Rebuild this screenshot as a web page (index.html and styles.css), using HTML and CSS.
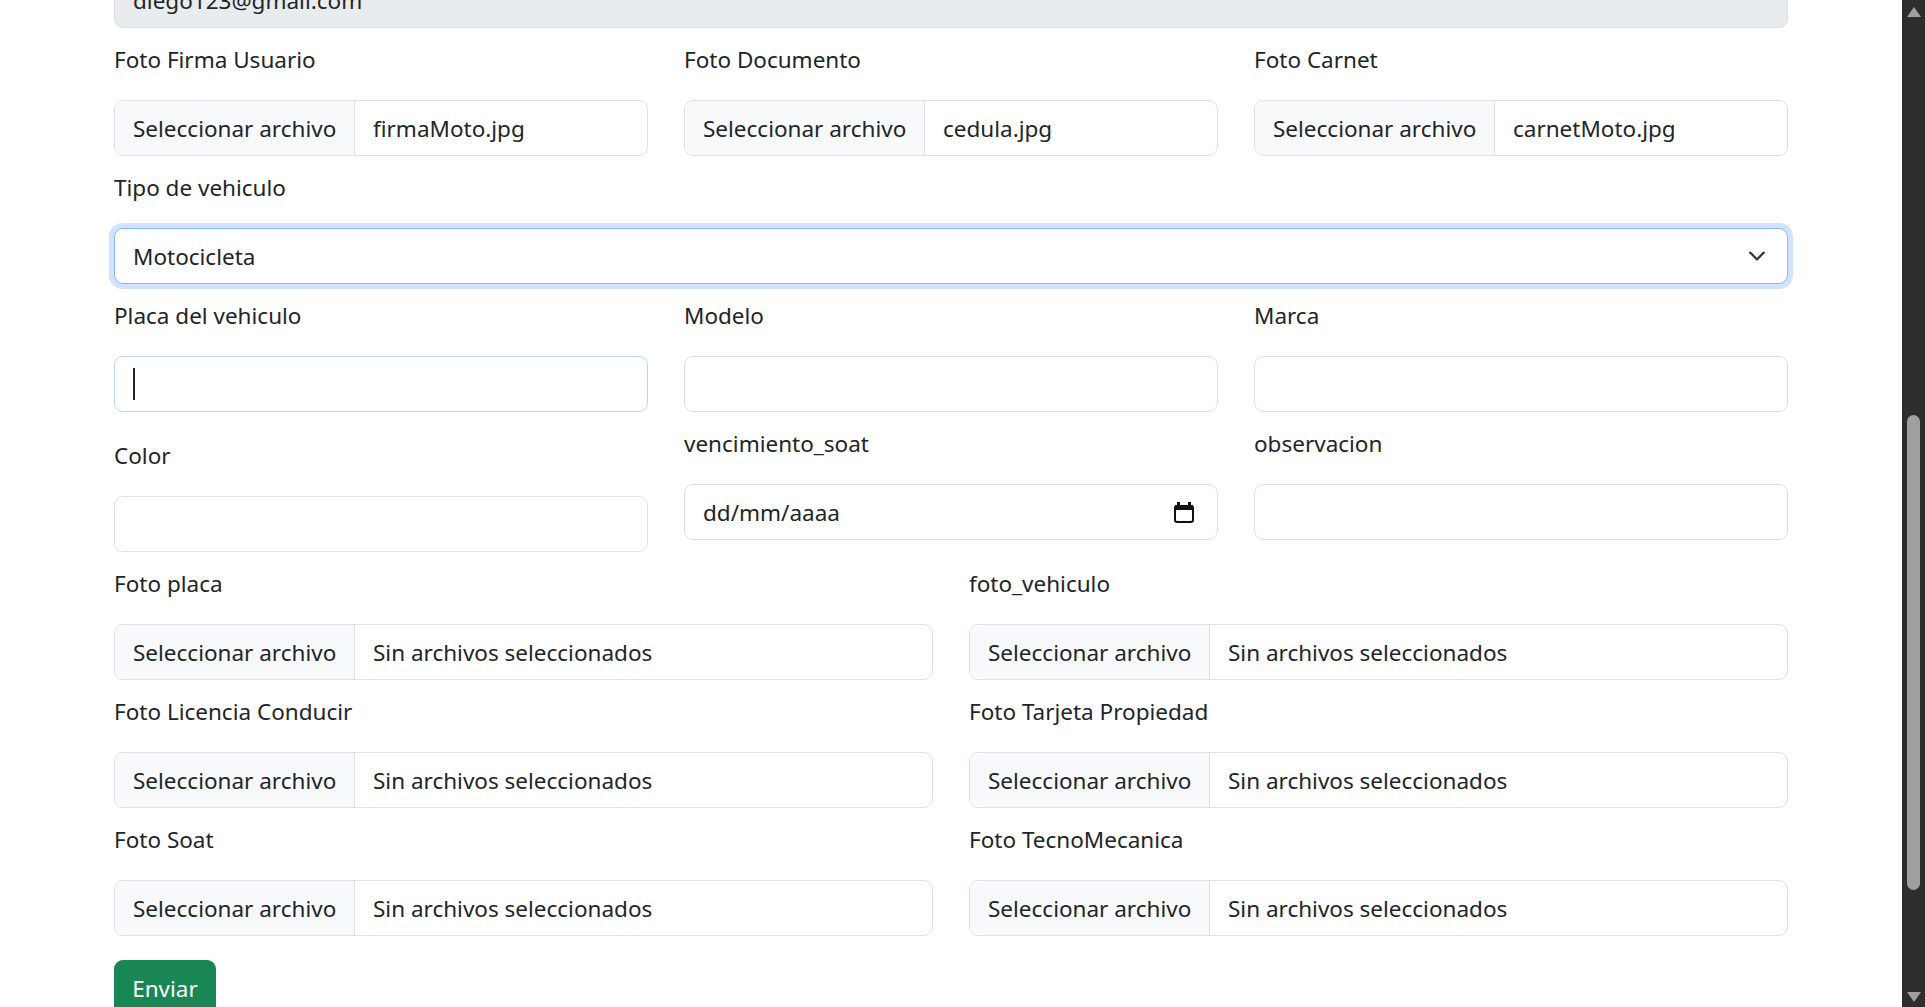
FILE: index.html
```html
<!DOCTYPE html>
<html lang="es">

<head>
    <meta charset="UTF-8">
    <title>Registro de vehiculo</title>
    <link rel="stylesheet" href="styles.css">
</head>

<body>

    <div class="page">
        <form class="form">
            <input class="field field-disabled" type="text" value="diego123@gmail.com" disabled>

            <div class="row row-3">
                <div class="col">
                    <label class="form-label">Foto Firma Usuario</label>
                    <div class="file"><span class="file-btn">Seleccionar archivo</span><span class="file-name">firmaMoto.jpg</span></div>
                </div>
                <div class="col">
                    <label class="form-label">Foto Documento</label>
                    <div class="file"><span class="file-btn">Seleccionar archivo</span><span class="file-name">cedula.jpg</span></div>
                </div>
                <div class="col">
                    <label class="form-label">Foto Carnet</label>
                    <div class="file"><span class="file-btn">Seleccionar archivo</span><span class="file-name">carnetMoto.jpg</span></div>
                </div>
            </div>

            <div class="col">
                <label class="form-label">Tipo de vehiculo</label>
                <div class="field field-select">
                    <span class="field-text">Motocicleta</span>
                    <svg class="chevron" viewBox="0 0 16 16" width="24" height="18"><path fill="none" stroke="#343a40" stroke-linecap="round" stroke-linejoin="round" stroke-width="2" d="m2 5 6 6 6-6"/></svg>
                </div>
            </div>

            <div class="row row-3">
                <div class="col">
                    <label class="form-label">Placa del vehiculo</label>
                    <div class="field field-focus"><span class="caret"></span></div>
                </div>
                <div class="col">
                    <label class="form-label">Modelo</label>
                    <input class="field" type="text">
                </div>
                <div class="col">
                    <label class="form-label">Marca</label>
                    <input class="field" type="text">
                </div>
            </div>

            <div class="row row-3">
                <div class="col col-color">
                    <label class="form-label">Color</label>
                    <input class="field" type="text">
                </div>
                <div class="col">
                    <label class="form-label">vencimiento_soat</label>
                    <div class="field field-date">
                        <span class="field-text">dd/mm/aaaa</span>
                        <svg class="calendar" viewBox="0 0 20 21" width="20" height="21">
                            <rect x="1" y="4" width="18" height="16" rx="2" fill="none" stroke="#111" stroke-width="2"/>
                            <rect x="1" y="3" width="18" height="5" fill="#111"/>
                            <rect x="3" y="0" width="3" height="4" fill="#111"/>
                            <rect x="14" y="0" width="3" height="4" fill="#111"/>
                        </svg>
                    </div>
                </div>
                <div class="col">
                    <label class="form-label">observacion</label>
                    <input class="field" type="text">
                </div>
            </div>

            <div class="row row-2">
                <div class="col">
                    <label class="form-label">Foto placa</label>
                    <div class="file"><span class="file-btn">Seleccionar archivo</span><span class="file-name">Sin archivos seleccionados</span></div>
                </div>
                <div class="col">
                    <label class="form-label">foto_vehiculo</label>
                    <div class="file"><span class="file-btn">Seleccionar archivo</span><span class="file-name">Sin archivos seleccionados</span></div>
                </div>
                <div class="col">
                    <label class="form-label">Foto Licencia Conducir</label>
                    <div class="file"><span class="file-btn">Seleccionar archivo</span><span class="file-name">Sin archivos seleccionados</span></div>
                </div>
                <div class="col">
                    <label class="form-label">Foto Tarjeta Propiedad</label>
                    <div class="file"><span class="file-btn">Seleccionar archivo</span><span class="file-name">Sin archivos seleccionados</span></div>
                </div>
                <div class="col">
                    <label class="form-label">Foto Soat</label>
                    <div class="file"><span class="file-btn">Seleccionar archivo</span><span class="file-name">Sin archivos seleccionados</span></div>
                </div>
                <div class="col">
                    <label class="form-label">Foto TecnoMecanica</label>
                    <div class="file"><span class="file-btn">Seleccionar archivo</span><span class="file-name">Sin archivos seleccionados</span></div>
                </div>
            </div>

            <button class="btn-send" type="button">Enviar</button>
        </form>

        <div class="scrollbar">
            <span class="arrow-up"></span>
            <span class="thumb"></span>
            <span class="arrow-down"></span>
        </div>
    </div>

</body>

</html>
```

FILE: styles.css
```css
html,
body {
    margin: 0;
    height: 100%;
    overflow: hidden;
    background: #fff;
}

body {
    font-family: "Noto Sans", Arial, sans-serif;
    font-size: 22.5px;
    line-height: 36px;
    color: #212529;
}

.page {
    display: flex;
    height: 1007px;
    overflow: hidden;
}

.form {
    flex: 1;
    min-width: 0;
    padding: 0 114px;
    margin-top: -28px;
}

.row {
    display: grid;
    column-gap: 36px;
}

.row-3 {
    grid-template-columns: repeat(3, 1fr);
}

.row-2 {
    grid-template-columns: repeat(2, 1fr);
}

.col {
    min-width: 0;
}

.col-color {
    padding-top: 12px;
}

.form-label {
    display: block;
    padding-top: 14px;
    margin-bottom: 22px;
}

.field {
    display: flex;
    align-items: center;
    box-sizing: border-box;
    width: 100%;
    height: 56px;
    padding: 0 18px;
    border: 1px solid #dee2e6;
    border-radius: 9px;
    background: #fff;
    color: #212529;
    font: inherit;
}

.field-text {
    padding-top: 2px;
}

.field-disabled {
    padding-top: 1px;
    background: #e9ecef;
}

.field-select {
    justify-content: space-between;
    border-color: #86b7fe;
    box-shadow: 0 0 0 5px #cfe2ff;
}

.field-focus {
    border-color: #bcd4f8;
}

.field-date {
    justify-content: space-between;
    padding-right: 23px;
}

.caret {
    width: 2px;
    height: 32px;
    background: #212529;
}

.file {
    display: flex;
    box-sizing: border-box;
    height: 56px;
    border: 1px solid #dee2e6;
    border-radius: 9px;
    overflow: hidden;
    line-height: 54px;
}

.file-btn {
    flex: none;
    width: 240px;
    box-sizing: border-box;
    padding: 1px 0 0 18px;
    background: #f8f9fa;
    border-right: 1px solid #dee2e6;
    white-space: nowrap;
}

.file-name {
    padding: 1px 0 0 18px;
    white-space: nowrap;
}

.btn-send {
    display: block;
    width: 102px;
    height: 56px;
    margin-top: 24px;
    padding: 2px 0 0;
    border: 1px solid #198754;
    border-radius: 9px;
    background: #198754;
    color: #fff;
    font: inherit;
}

.scrollbar {
    position: relative;
    flex: none;
    width: 23px;
    background: #2d2d2d;
}

.thumb {
    position: absolute;
    left: 5px;
    top: 415px;
    width: 13px;
    height: 475px;
    border-radius: 7px;
    background: #9f9f9f;
}

.arrow-up,
.arrow-down {
    position: absolute;
    left: 5px;
    width: 0;
    height: 0;
    border-left: 7px solid transparent;
    border-right: 7px solid transparent;
}

.arrow-up {
    top: 7px;
    border-bottom: 10px solid #9f9f9f;
}

.arrow-down {
    top: 992px;
    border-top: 10px solid #9f9f9f;
}
```
